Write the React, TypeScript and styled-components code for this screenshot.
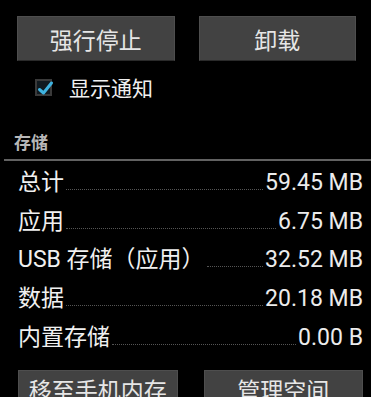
import React from "react";
import styled, { createGlobalStyle } from "styled-components";

const Global = createGlobalStyle`
  html, body { margin: 0; padding: 0; background: #000; }
  body { font-family: "Noto Sans CJK SC", "Noto Sans", sans-serif; overflow: hidden; }
`;

const Page = styled.div`
  width: 371px;
  height: 397px;
  background: #000;
  padding-top: 16px;
  box-sizing: border-box;
  overflow: hidden;
`;

const ButtonRow = styled.div<{ $left: number; $right: number; $gap: number }>`
  display: grid;
  grid-template-columns: 1fr 1fr;
  column-gap: ${(p) => p.$gap}px;
  padding: 0 ${(p) => p.$right}px 0 ${(p) => p.$left}px;
`;

const Button = styled.div<{ $lift?: number }>`
  height: 45px;
  box-sizing: border-box;
  background: #424242;
  border: 1px solid #4e4e4e;
  border-bottom-color: #2a2a2a;
  display: flex;
  align-items: center;
  justify-content: center;
  padding-bottom: ${(p) => p.$lift ?? 0}px;
  color: #e6e6e6;
  font-size: 23px;
`;

const CheckRow = styled.div`
  height: 55px;
  display: flex;
  align-items: center;
  padding-left: 35px;
  padding-bottom: 3px;
  box-sizing: border-box;
  gap: 17px;
  color: #f0f0f0;
  font-size: 21px;
`;

const Box = styled.div`
  width: 17px;
  height: 17px;
  box-sizing: border-box;
  border: 2px solid #3a3a3a;
  background: #111a20;
  position: relative;
`;

const CheckMark = styled.svg`
  position: absolute;
  left: 0px;
  top: -1px;
`;

const SectionTitle = styled.div`
  height: 45px;
  display: flex;
  align-items: center;
  padding-top: 7px;
  color: #b8b8b8;
  font-size: 17px;
  font-weight: 700;
  border-bottom: 2px solid #626262;
  margin-left: 4px;
  padding-left: 10px;
  box-sizing: border-box;
`;

const List = styled.div`
  padding-top: 3px;
`;

const Row = styled.div`
  height: 38.7px;
  display: flex;
  align-items: baseline;
  padding: 0 8px 0 18px;
  line-height: 38.7px;
  color: #f0f0f0;
`;

const Label = styled.span`
  font-family: "Roboto", "Noto Sans CJK SC", sans-serif;
  font-size: 23px;
  white-space: nowrap;
`;

const Filler = styled.div`
  flex: 1;
  height: 1px;
  margin: 0 2px;
  border-bottom: 1px dotted #555;
`;

const Value = styled.span`
  font-family: "Roboto", sans-serif;
  font-size: 23px;
  color: #ececec;
  white-space: nowrap;
`;

const BottomRow = styled(ButtonRow)`
  margin-top: 13px;
`;

const rows: [string, string][] = [
  ["总计", "59.45 MB"],
  ["应用", "6.75 MB"],
  ["USB 存储（应用）", "32.52 MB"],
  ["数据", "20.18 MB"],
  ["内置存储", "0.00 B"],
];

export default function App() {
  return (
    <>
      <Global />
      <Page>
        <ButtonRow $left={17} $right={15} $gap={24}>
          <Button>强行停止</Button>
          <Button>卸载</Button>
        </ButtonRow>
        <CheckRow>
          <Box>
            <CheckMark width="17" height="17" viewBox="0 0 17 17">
              <path
                d="M2.5 9.5 L6.5 13 L14.5 3"
                fill="none"
                stroke="#3fb3e0"
                strokeWidth="3"
                strokeLinecap="round"
                strokeLinejoin="round"
              />
            </CheckMark>
          </Box>
          <span>显示通知</span>
        </CheckRow>
        <SectionTitle>存储</SectionTitle>
        <List>
          {rows.map(([l, v]) => (
            <Row key={l}>
              <Label>{l}</Label>
              <Filler />
              <Value>{v}</Value>
            </Row>
          ))}
        </List>
        <BottomRow $left={18} $right={8} $gap={26}>
          <Button $lift={8}>移至手机内存</Button>
          <Button $lift={8}>管理空间</Button>
        </BottomRow>
      </Page>
    </>
  );
}
